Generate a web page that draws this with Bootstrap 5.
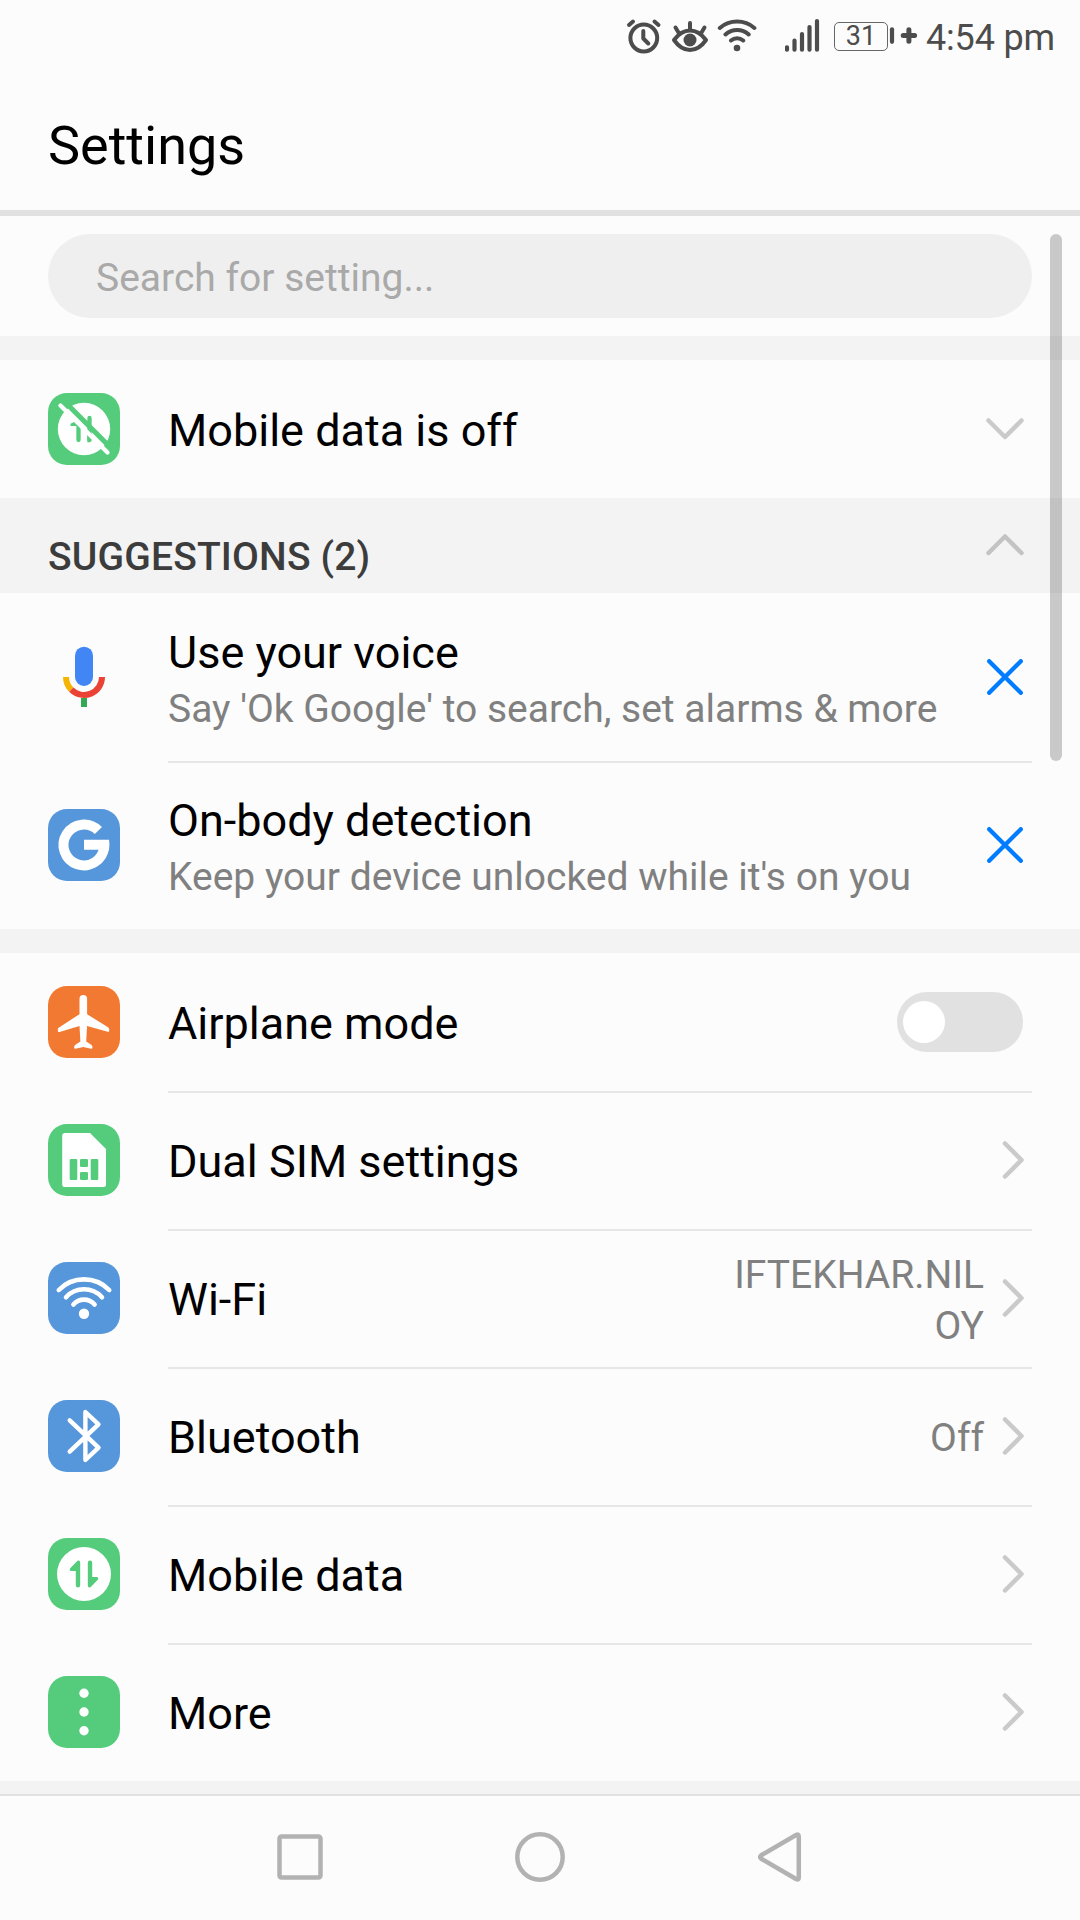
<!DOCTYPE html>
<html lang="en">
<head>
<meta charset="utf-8">
<meta name="viewport" content="width=device-width, initial-scale=1">
<title>Settings</title>
<link href="https://cdn.jsdelivr.net/npm/bootstrap@5.3.0/dist/css/bootstrap.min.css" rel="stylesheet">
<style>
body{font-family:Roboto,"Noto Sans",sans-serif;background:#fcfcfc;color:#000;width:1080px;height:1920px;overflow:hidden}
svg{display:block;flex:none;fill:none;stroke-linecap:round;stroke-linejoin:round}
.status-strip{height:72px;color:#4c4c4c;padding-right:25px}
.clock{font-size:36px;line-height:42px;margin-left:8px;padding-top:3px;letter-spacing:-.15px}
.signal{margin-left:28px}
.batt-level{font-size:27px;line-height:29px;width:54px;height:29px;border:1.5px solid #666;border-radius:5px;margin-left:14px}
.title-bar{height:144px;border-bottom:6px solid #e1e1e1;padding:10px 48px 0}
.title-bar h1{font-size:54px;font-weight:400;line-height:64px}
.search-wrap{padding:18px 48px}
.search-box,.search-box:focus{height:84px;background:#efefef;border:0;padding:4px 48px 0;font-size:39px;color:#000}
.search-box::placeholder{color:#a9a9a9;opacity:1}
.band{height:24px;background:#f3f3f3}
.section-head{height:95px;background:#f3f3f3;padding:0 56px 0 48px}
.section-head h2{font-size:39px;font-weight:500;line-height:46px;color:#3c3c3c;padding-top:22px;letter-spacing:.17px}
.section-head svg{margin-bottom:1px}
.entry{height:138px;padding:0 48px}
.entry.tall{height:168px}
.entry-body{margin-left:48px;padding-right:8px}
.entry.tall .entry-body,.entry .switch-body{padding-right:9px}
.entry + .entry .entry-body{box-shadow:inset 0 2px #e6e6e6}
.tile{width:72px;height:72px;border-radius:19px;flex:none}
.green{background:#55cc7c;color:#55cc7c}.blue{background:#5696db}.orange{background:#f27931}
.label{font-size:45px;line-height:54px;padding-top:3px}
.tall .label{line-height:57px;padding-top:8px}
.note,.value{font-size:39px;color:#808080}
.note{line-height:57px;white-space:nowrap}
.value{line-height:51px;max-width:256px;word-break:break-all;text-align:right;margin-right:18px;padding-top:5px}
.toggle{width:126px;height:60px;background:#e1e1e1;padding-left:6px}
.knob{width:42px;height:42px;background:#fff}
.cut-band{height:13px;background:#f3f3f3}
.sysnav{height:126px;border-top:2px solid #e1e1e1;padding:0 276px 2px}
.scroll-thumb{position:absolute;left:1050px;top:18px;width:12px;height:527px;background:rgba(0,0,0,.2)}
</style>
<script src="https://cdn.jsdelivr.net/npm/bootstrap@5.3.0/dist/js/bootstrap.bundle.min.js"></script>
</head>
<body>
<div class="status-strip d-flex align-items-center justify-content-end">
  <svg width="132" height="72" viewBox="624 0 132 72" stroke="#4c4c4c" stroke-width="4">
    <circle cx="642.8" cy="38" r="13.4"/><path d="M642.3 31v7.5l5 5M628 25l4-3.5M657.5 25l-4-3.5"/>
    <path d="M673 40q7-9.500 16-9.500t16 9.500q-7 10-16 10t-16-10z"/><circle cx="689" cy="40" r="6.500" fill="#4c4c4c" stroke="none"/><path d="M689 30v-7M677.500 32.500l-3-5M700.500 32.500l3-5"/>
    <path d="M718.800 28a26.500 26.500 0 0 1 34.600 0M724.500 34.500a17 17 0 0 1 23.200 0M730 40.500a9.500 9.500 0 0 1 12.200 0"/><circle cx="736" cy="48" r="3.300" fill="#4c4c4c" stroke="none"/>
  </svg>
  <svg class="signal" width="35" height="72" viewBox="784 0 35 72" stroke="#4c4c4c" stroke-width="4.200"><path d="M786 47.300v2.400M793.500 40.500v9.200M801 34v15.700M808.500 27v22.700M816 21v28.700"/></svg>
  <span class="batt-level d-flex justify-content-center align-items-center">31</span>
  <svg width="30" height="72" viewBox="888 0 30 72" stroke="#4c4c4c"><path stroke-width="4.200" d="M892 29.300v12.500"/><path stroke-width="5" d="M903.200 35.500h11.400M908.900 29.800v11.400"/></svg>
  <span class="clock">4:54 pm</span>
</div>
<header class="title-bar d-flex align-items-center"><h1 class="m-0">Settings</h1></header>
<main class="position-relative">
  <div class="scroll-thumb rounded-pill"></div>
  <div class="search-wrap"><input class="form-control rounded-pill search-box" type="text" placeholder="Search for setting..."></div>
  <div class="band"></div>
  <div class="entry d-flex align-items-center">
    <div class="tile green"><svg width="72" height="72" viewBox="0 0 72 72"><circle cx="36" cy="36" r="26.200" fill="#fff"/><path d="M30.500 31v16M41.500 25v22" stroke="currentColor" stroke-width="4.300"/><path d="M30.500 28.800h-4l-4 2v2.200h8zM39.400 42v7.300h2l5-5z" fill="currentColor"/><path d="M17 9L64 56" stroke="currentColor" stroke-width="5.200"/><path d="M12.500 12.500l47 47" stroke="#fff" stroke-width="4.300"/></svg></div>
    <div class="entry-body d-flex flex-fill align-items-center align-self-stretch justify-content-between"><span class="label">Mobile data is off</span>
      <svg width="38" height="22" stroke="#cacaca" stroke-width="4.500"><path d="M2.500 2.500L19 19 35.500 2.500"/></svg></div>
  </div>
  <section>
    <div class="section-head d-flex align-items-center justify-content-between"><h2 class="m-0">SUGGESTIONS (2)</h2>
      <svg width="38" height="22" stroke="#c3c3c3" stroke-width="4.500"><path d="M2.500 19L19 2.500 35.500 19"/></svg></div>
    <div class="entry tall d-flex align-items-center">
      <div class="tile"><svg width="72" height="72" stroke-width="6" style="stroke-linecap:butt"><rect x="27" y="5.700" width="18" height="39.300" rx="9" fill="#4285f4"/><path d="M18 36a18 18 0 0 0 5.270 12.730" stroke="#f4b400"/><path d="M23.270 48.730A18 18 0 0 0 54 36" stroke="#ea4335"/><path d="M36 57v9" stroke="#34a853"/></svg></div>
      <div class="entry-body d-flex flex-fill align-items-center align-self-stretch justify-content-between"><div><div class="label">Use your voice</div><div class="note">Say 'Ok Google' to search, set alarms &amp; more</div></div>
        <svg width="36" height="36" stroke="#007dff" stroke-width="4.300"><path d="M2.200 2.200l31.600 31.600M33.800 2.200L2.200 33.800"/></svg></div>
    </div>
    <div class="entry tall d-flex align-items-center">
      <div class="tile blue"><svg width="72" height="72" style="stroke-linecap:butt"><path d="M50.400 21.600A20.400 20.400 0 1 0 56.200 38" stroke="#fff" stroke-width="10"/><path d="M36 30.800h25q.4 2.500.4 5t-.7 6l-5-1H36z" fill="#fff"/></svg></div>
      <div class="entry-body d-flex flex-fill align-items-center align-self-stretch justify-content-between"><div><div class="label">On-body detection</div><div class="note">Keep your device unlocked while it's on you</div></div>
        <svg width="36" height="36" stroke="#007dff" stroke-width="4.300"><path d="M2.200 2.200l31.600 31.600M33.800 2.200L2.200 33.800"/></svg></div>
    </div>
  </section>
  <div class="band"></div>
  <section>
    <div class="entry d-flex align-items-center">
      <div class="tile orange"><svg width="72" height="72"><path fill="#fff" d="M31.500 12.700a3.800 3.800 0 0 1 7.600 0V28.200L60 41.300q1.200.8 1.200 2v1.500q0 1.500-1.500 1L39.100 40l-.9 15.500 5 3.300q1.200.9 1.200 2v1q0 1.300-1.300 1L35.300 61l-7.700 1.800q-1.400.3-1.400-1v-1q0-1.200 1.200-2l5-3.300L31.500 40l-20 6q-1.700.4-1.700-1v-1.600q0-1.300 1.200-2l20.500-13.200z"/></svg></div>
      <div class="entry-body switch-body d-flex flex-fill align-items-center align-self-stretch justify-content-between"><span class="label">Airplane mode</span>
        <div class="toggle rounded-pill d-flex align-items-center" role="switch" aria-checked="false"><div class="knob rounded-circle"></div></div></div>
    </div>
    <div class="entry d-flex align-items-center">
      <div class="tile green"><svg width="72" height="72"><path fill="#fff" d="M16.500 9H42l16 16v35.500q0 2.500-2.500 2.500h-39q-2.300 0-2.300-2.500v-49q0-2.500 2.300-2.500z"/><g fill="currentColor"><rect x="21.700" y="35" width="7.600" height="21" rx="1.300"/><rect x="32" y="35" width="8" height="8" rx="1.300"/><rect x="32" y="48" width="8" height="8" rx="1.300"/><rect x="42.700" y="35" width="7.600" height="21" rx="1.300"/></g></svg></div>
      <div class="entry-body d-flex flex-fill align-items-center align-self-stretch justify-content-between"><span class="label">Dual SIM settings</span>
        <svg width="22" height="38" stroke="#cacaca" stroke-width="4.500"><path d="M3 2.500L19.500 19 3 35.500"/></svg></div>
    </div>
    <div class="entry d-flex align-items-center">
      <div class="tile blue"><svg width="72" height="72" stroke="#fff" stroke-width="4.600"><path d="M10.800 28a35.300 35.300 0 0 1 50.400 0M18 35.200a24.500 24.500 0 0 1 36 0M25.400 42.500a14 14 0 0 1 21.200 0"/><circle cx="36" cy="51.800" r="5.200" fill="#fff" stroke="none"/></svg></div>
      <div class="entry-body d-flex flex-fill align-items-center align-self-stretch"><span class="label me-auto">Wi-Fi</span><span class="value">IFTEKHAR.NILOY</span>
        <svg width="22" height="38" stroke="#cacaca" stroke-width="4.500"><path d="M3 2.500L19.500 19 3 35.500"/></svg></div>
    </div>
    <div class="entry d-flex align-items-center">
      <div class="tile blue"><svg width="72" height="72" stroke="#fff" stroke-width="4.400"><path d="M21.700 20.300L50.500 47.700 37.400 60V12L50.500 24.300 21.700 51.700"/></svg></div>
      <div class="entry-body d-flex flex-fill align-items-center align-self-stretch"><span class="label me-auto">Bluetooth</span><span class="value">Off</span>
        <svg width="22" height="38" stroke="#cacaca" stroke-width="4.500"><path d="M3 2.500L19.500 19 3 35.500"/></svg></div>
    </div>
    <div class="entry d-flex align-items-center">
      <div class="tile green"><svg width="72" height="72"><circle cx="36" cy="36" r="27" fill="#fff"/><g fill="currentColor"><path d="M29.500 22.800q2.700-.8 2.700 2v22.400a2.200 2.200 0 0 1-4.400 0V33H23q-2-.6-.8-2.800z"/><path d="M42.500 49.200q-2.700.8-2.700-2V24.800a2.200 2.200 0 0 1 4.400 0V39H49q2 .6.800 2.800z"/></g></svg></div>
      <div class="entry-body d-flex flex-fill align-items-center align-self-stretch justify-content-between"><span class="label">Mobile data</span>
        <svg width="22" height="38" stroke="#cacaca" stroke-width="4.500"><path d="M3 2.500L19.500 19 3 35.500"/></svg></div>
    </div>
    <div class="entry d-flex align-items-center">
      <div class="tile green"><svg width="72" height="72"><g fill="#fff"><circle cx="36" cy="17.300" r="4.700"/><circle cx="36" cy="36" r="4.700"/><circle cx="36" cy="54.700" r="4.700"/></g></svg></div>
      <div class="entry-body d-flex flex-fill align-items-center align-self-stretch justify-content-between"><span class="label">More</span>
        <svg width="22" height="38" stroke="#cacaca" stroke-width="4.500"><path d="M3 2.500L19.500 19 3 35.500"/></svg></div>
    </div>
  </section>
  <div class="cut-band"></div>
</main>
<nav class="sysnav d-flex align-items-center justify-content-between">
  <svg width="48" height="52" stroke="#b2b2b2" stroke-width="4.500"><rect x="3.500" y="5.500" width="41" height="41" rx="2"/></svg>
  <svg width="52" height="52" stroke="#b2b2b2" stroke-width="4.500"><circle cx="26" cy="26" r="22.700"/></svg>
  <svg width="48" height="52" stroke="#b2b2b2" stroke-width="4.500"><path d="M5.200 24.200Q3 26 5.200 27.800L40.500 48.200Q42.800 49 42.800 46.500V5.500Q42.800 3 40.500 3.800z"/></svg>
</nav>
</body>
</html>
